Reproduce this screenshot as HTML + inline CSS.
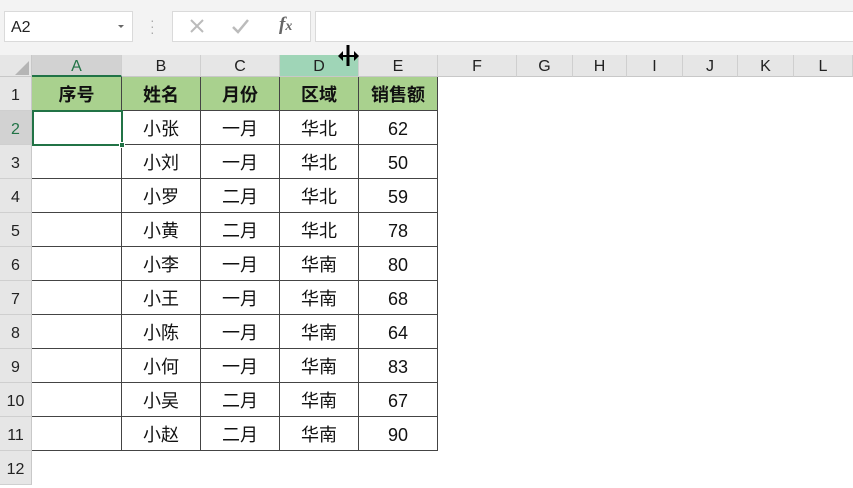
<!DOCTYPE html>
<html><head><meta charset="utf-8"><style>
*{margin:0;padding:0;box-sizing:border-box}
body{width:853px;height:480px;overflow:hidden;background:#fff;position:relative;font-family:"Liberation Sans","Noto Sans CJK SC",sans-serif}
.a{position:absolute}
.top{left:0;top:0;width:853px;height:55px;background:#f3f3f3}
.box{background:#fff;border:1px solid #dadada}
.ch{top:55px;height:22px;background:#e6e6e6;border-right:1px solid #cfcfcf;border-bottom:1px solid #c8c8c8;font-size:16px;color:#222;text-align:center;line-height:24px}
.rh{left:0;width:32px;height:34px;background:#e6e6e6;border-bottom:1px solid #cfcfcf;border-right:1px solid #c8c8c8;font-size:16px;color:#222;text-align:center;line-height:37px}
.c{height:34px;font-size:18px;color:#111;text-align:center;line-height:37px;border-right:1px solid #444;border-bottom:1px solid #444}
.h{background:#a9d18e;font-weight:bold;line-height:36px}
</style></head><body>
<div class="a top"></div>
<div class="a box" style="left:4px;top:11px;width:129px;height:31px;font-size:16px;line-height:31px;padding-left:6px;color:#222">A2</div>
<div class="a" style="left:118px;top:25px;width:0;height:0;border-left:3px solid transparent;border-right:3px solid transparent;border-top:3px solid #666"></div>
<div class="a" style="left:150px;top:17px;color:#aaa;font-size:14px;line-height:6px">·<br>·<br>·</div>
<div class="a box" style="left:172px;top:11px;width:139px;height:31px"></div>
<svg class="a" style="left:172px;top:11px" width="140" height="31">
<path d="M19 9 L31 21 M31 9 L19 21" stroke="#bbb" stroke-width="2" fill="none"/>
<path d="M61 16 L66 21 L76 9" stroke="#bbb" stroke-width="2.5" fill="none"/>
</svg>
<div class="a" style="left:279px;top:14px;font-size:19px;color:#666;font-style:italic;font-weight:bold;font-family:'Liberation Serif',serif">f<span style="font-size:14px">x</span></div>
<div class="a box" style="left:315px;top:11px;width:540px;height:31px"></div>
<div class="a" style="left:0;top:55px;width:32px;height:22px;background:#e6e6e6;border-right:1px solid #c8c8c8;border-bottom:1px solid #c8c8c8"></div>
<div class="a" style="left:15px;top:61px;width:0;height:0;border-left:14px solid transparent;border-bottom:14px solid #b5b5b5"></div>
<div id="g"></div>
<svg class="a" style="left:337px;top:44px" width="24" height="24">
<path d="M11 1 V22" stroke="#000" stroke-width="3" fill="none"/>
<path d="M2 12 H20" stroke="#000" stroke-width="2" fill="none"/>
<path d="M1 12 L6 7 V17 Z M22 12 L17 7 V17 Z" fill="#000"/>
</svg>
<script>
var xs=[32,122,201,280,359,438,517,573,627,683,738,794,853],L="ABCDEFGHIJKL",h="";
for(var i=0;i<12;i++){var bg=i==0?"background:#d2d2d2;color:#217346;border-bottom:2px solid #217346;":i==3?"background:#9fd5b7;":"";
h+='<div class="a ch" style="left:'+xs[i]+'px;width:'+(xs[i+1]-xs[i])+'px;'+bg+'">'+L[i]+'</div>';}
for(var r=0;r<12;r++){var y=77+r*34;var bg=r==1?"background:#d2d2d2;color:#217346;":"";
h+='<div class="a rh" style="top:'+y+'px;'+bg+'">'+(r+1)+'</div>';}
var d=[["序号","姓名","月份","区域","销售额"],["","小张","一月","华北","62"],["","小刘","一月","华北","50"],["","小罗","二月","华北","59"],["","小黄","二月","华北","78"],["","小李","一月","华南","80"],["","小王","一月","华南","68"],["","小陈","一月","华南","64"],["","小何","一月","华南","83"],["","小吴","二月","华南","67"],["","小赵","二月","华南","90"]];
for(var r=0;r<11;r++)for(var c=0;c<5;c++){var y=77+r*34;
h+='<div class="a c'+(r==0?' h':'')+'" style="left:'+xs[c]+'px;top:'+y+'px;width:'+(xs[c+1]-xs[c])+'px;">'+d[r][c]+'</div>';}
h+='<div class="a" style="left:32px;top:110px;width:91px;height:36px;border:2px solid #217346"></div>';
h+='<div class="a" style="left:119px;top:142px;width:6px;height:6px;background:#217346;border:1px solid #fff"></div>';
document.getElementById("g").innerHTML=h;
</script>
</body></html>
